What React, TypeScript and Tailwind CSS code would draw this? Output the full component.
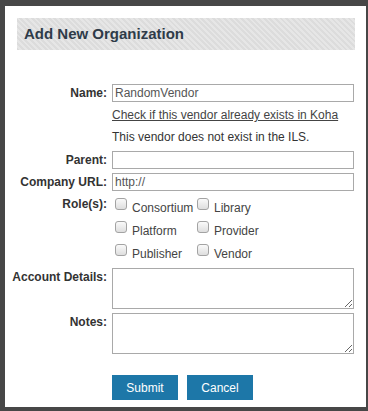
import React from "react";

const roles = [
  ["Consortium", "Library"],
  ["Platform", "Provider"],
  ["Publisher", "Vendor"],
];

function Label({ children, className = "" }: { children: React.ReactNode; className?: string }) {
  return (
    <div className={"w-[90px] shrink-0 flex justify-end whitespace-nowrap font-bold text-[#333] leading-[16px] " + className}>
      {children}
    </div>
  );
}

function Check({ label }: { label: string }) {
  return (
    <div className="w-[82px] flex items-start">
      <span className="mt-[2px] ml-[3px] w-[12px] h-[12px] rounded-[3px] border border-[#a3a3a3] bg-gradient-to-b from-[#fafafa] to-[#dedede] shrink-0" />
      <span className="ml-[5px] mt-[4px] leading-[16px] text-[#444]">{label}</span>
    </div>
  );
}

export default function App() {
  return (
    <div className="w-[368px] h-[411px] bg-[#474747] pt-[6px] pl-[5px] font-['Liberation_Sans',Arial,sans-serif] text-[12px]">
      <div className="w-[361px] h-[401px] bg-white px-[12px] pt-[12px]">
        <div className="h-[32px] w-[338px] flex items-center pl-[7px] bg-[repeating-linear-gradient(45deg,#dcdcdc_0px,#dcdcdc_2px,#e6e6e6_2px,#e6e6e6_4px)]">
          <h2 className="text-[15px] font-bold text-[#2e3b49]">Add New Organization</h2>
        </div>

        <div className="mt-[34px] flex items-center">
          <Label>Name:</Label>
          <input
            readOnly
            value="RandomVendor"
            className="ml-[5px] w-[246px] h-[18px] border border-[#a9a9a9] px-[2px] text-[12px] text-[#555] outline-none"
          />
        </div>

        <div className="mt-[5px] pl-[95px] leading-[16px]">
          <a href="#" className="underline text-[#444]">Check if this vendor already exists in Koha</a>
        </div>
        <div className="mt-[6px] pl-[95px] leading-[16px] text-[#333]">This vendor does not exist in the ILS.</div>

        <div className="mt-[6px] flex items-center">
          <Label>Parent:</Label>
          <input readOnly className="ml-[5px] w-[246px] h-[18px] border border-[#a9a9a9] px-[2px] text-[12px] outline-none" />
        </div>

        <div className="mt-[4px] flex items-center">
          <Label>Company URL:</Label>
          <input
            readOnly
            value="http://"
            className="ml-[5px] w-[246px] h-[18px] border border-[#a9a9a9] px-[2px] text-[12px] text-[#555] outline-none"
          />
        </div>

        <div className="mt-[5px] flex items-start">
          <Label>Role(s):</Label>
          <div className="ml-[5px] flex flex-col">
            {roles.map((row) => (
              <div key={row[0]} className="h-[23px] flex">
                <Check label={row[0]} />
                <Check label={row[1]} />
              </div>
            ))}
          </div>
        </div>

        <div className="mt-[3px] flex items-start">
          <Label className="pt-[1px]">Account Details:</Label>
          <textarea readOnly className="ml-[5px] w-[244px] h-[41px] border border-[#a9a9a9] outline-none block" />
        </div>

        <div className="mt-[4px] flex items-start">
          <Label className="pt-[1px]">Notes:</Label>
          <textarea readOnly className="ml-[5px] w-[244px] h-[41px] border border-[#a9a9a9] outline-none block" />
        </div>

        <div className="mt-[21px] pl-[95px] flex gap-[9px]">
          <button className="w-[66px] h-[25px] bg-[#1d77a8] text-white text-[12px]">Submit</button>
          <button className="w-[66px] h-[25px] bg-[#1d77a8] text-white text-[12px]">Cancel</button>
        </div>
      </div>
    </div>
  );
}
